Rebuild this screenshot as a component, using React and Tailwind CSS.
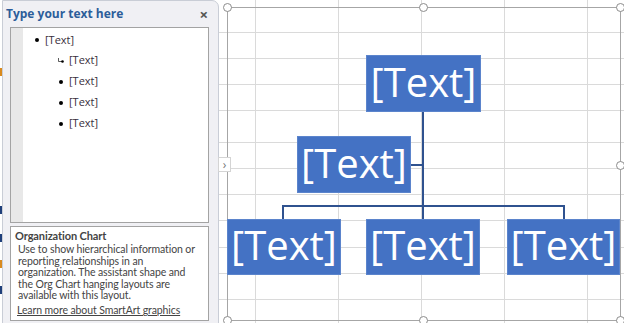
import React from "react";

const rows = [32, 58, 84, 110, 142, 168, 194, 220, 247, 273, 299];
const cols = [36, 119, 202, 285, 368];

const descLines = [
  "Use to show hierarchical information or",
  "reporting relationships in an",
  "organization. The assistant shape and",
  "the Org Chart hanging layouts are",
  "available with this layout.",
];

const Box = ({ className }) => (
  <div
    className={`absolute bg-[#4472c4] border border-[#5b84cc] flex items-center justify-center text-white text-[40px] leading-none font-['Open_Sans',sans-serif] ${className}`}
  >
    <span className="-mt-[4px]">[Text]</span>
  </div>
);

const Bullet = () => <div className="w-[4px] h-[4px] rounded-full bg-black" />;

const App = () => {
  const subItems = ["[Text]", "[Text]", "[Text]", "[Text]"];

  return (
    <div className="w-[624px] h-[323px] bg-white flex overflow-hidden font-['Open_Sans',sans-serif]">
      {/* sliver of sheet behind the pane */}
      <div className="w-[2px] h-full flex flex-col">
        <div className="h-[68px]" />
        <div className="h-[8px] bg-[#d98a1e]" />
        <div className="h-[130px]" />
        <div className="h-[8px] bg-[#1f3f7a]" />
        <div className="h-[20px]" />
        <div className="h-[8px] bg-[#1f3f7a]" />
        <div className="h-[18px]" />
        <div className="h-[8px] bg-[#d98a1e]" />
        <div className="h-[18px]" />
        <div className="h-[8px] bg-[#1f3f7a]" />
      </div>

      {/* text pane */}
      <div className="w-[217px] h-[324px] bg-[#f0f0f4] border border-[#c9cdd6] rounded-tr-[7px] flex flex-col pl-[7px] pr-[9px]">
        <div className="h-[26px] flex items-center justify-between pr-[1px]">
          <span className="text-[12px] font-bold text-[#2c5d9a] -ml-[4px]">Type your text here</span>
          <span className="text-[15px] font-bold text-[#555] leading-none">×</span>
        </div>

        <div className="h-[196px] bg-white border border-[#a3a3a3] flex">
          <div className="w-[12px] h-full bg-[#e8e8e8]" />
          <div className="flex-1 flex flex-col pt-[2px] text-[11px] text-[#3a2f3c]">
            <div className="h-[20px] flex items-center pl-[12px] gap-[6px]">
              <Bullet />
              <span>[Text]</span>
            </div>
            {subItems.map((t, i) => (
              <div key={i} className="h-[21px] flex items-center pl-[35px] gap-[5px]">
                {i === 0 ? (
                  <svg width="6" height="6" viewBox="0 0 6 6">
                    <path d="M0.5 0 V3.5 H4" stroke="#333" strokeWidth="0.8" fill="none" />
                    <circle cx="4.5" cy="3.5" r="1.3" fill="#000" />
                  </svg>
                ) : (
                  <div className="w-[6px] flex justify-center">
                    <Bullet />
                  </div>
                )}
                <span>{t}</span>
              </div>
            ))}
          </div>
        </div>

        <div className="mt-[3px] h-[95px] bg-white border border-[#a3a3a3] px-[4px] pt-[1px] text-[10.5px] tracking-[-0.1px] leading-[11.6px] text-[#444] font-['Lato',sans-serif] whitespace-nowrap">
          <div className="font-bold text-[11px] leading-[15px]">Organization Chart</div>
          <div className="pl-[3px] mt-[1px] flex flex-col">
            {descLines.map((l) => (
              <span key={l}>{l}</span>
            ))}
          </div>
          <div className="pl-[2px] mt-[3px] underline">Learn more about SmartArt graphics</div>
        </div>
      </div>

      {/* sheet canvas */}
      <div className="relative flex-1 h-full">
        <svg className="absolute inset-0" width="405" height="323">
          {rows.map((y) => (
            <line key={"r" + y} x1="0" x2="405" y1={y + 0.5} y2={y + 0.5} stroke="#dadada" />
          ))}
          {cols.map((x) => (
            <line key={"c" + x} y1="0" y2="323" x1={x + 0.5} x2={x + 0.5} stroke="#dadada" />
          ))}
          <rect x="8.5" y="7.5" width="393" height="313" fill="none" stroke="#a6a6a6" />
          <g stroke="#2f528f" strokeWidth="2" fill="none">
            <path d="M204 111 V219" />
            <path d="M192 165 H204" />
            <path d="M64 219 V206 H345 V219" />
          </g>
          {[
            [8, 7],
            [204, 7],
            [401, 7],
            [401, 165],
            [8, 320],
            [204, 320],
            [401, 320],
          ].map(([x, y], i) => (
            <circle key={i} cx={x + 0.5} cy={y + 0.5} r="4" fill="#fff" stroke="#8c8c8c" />
          ))}
        </svg>

        <Box className="left-[147px] top-[55px] w-[115px] h-[57px]" />
        <Box className="left-[78px] top-[136px] w-[114px] h-[57px]" />
        <Box className="left-[8px] top-[219px] w-[114px] h-[56px]" />
        <Box className="left-[147px] top-[219px] w-[114px] h-[56px]" />
        <Box className="left-[288px] top-[219px] w-[113px] h-[56px]" />

        <div className="absolute -left-[1px] top-[157px] w-[13px] h-[15px] bg-white border border-[#d4d4d4] flex items-center justify-center text-[12px] text-[#777] leading-none">
          ›
        </div>
      </div>
    </div>
  );
};

export default App;
